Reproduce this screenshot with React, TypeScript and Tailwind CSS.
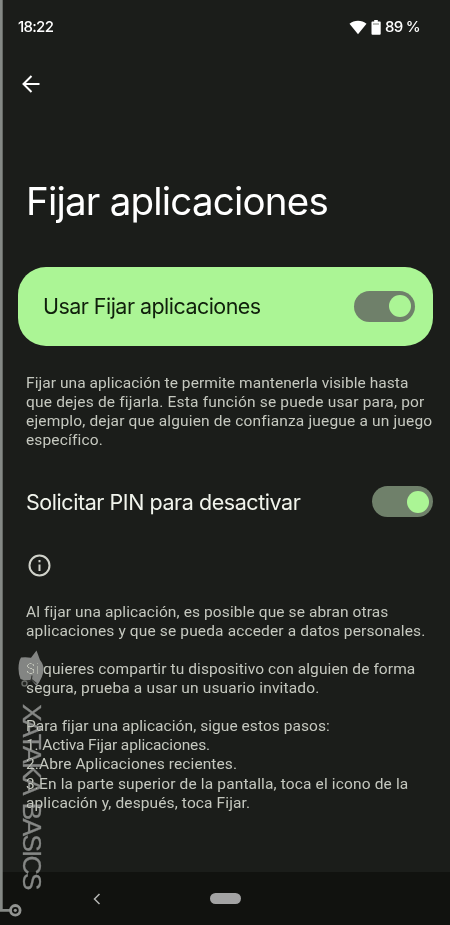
type Line = { text: string; className?: string }

const introLines: Line[] = [
    { text: "Fijar una aplicación te permite mantenerla visible hasta", className: "tracking-[0.060px]" },
    { text: "que dejes de fijarla. Esta función se puede usar para, por", className: "tracking-[0.180px]" },
    { text: "ejemplo, dejar que alguien de confianza juegue a un juego", className: "tracking-[0.165px]" },
    { text: "específico.", className: "tracking-[0.150px]" },
]

const infoParagraphs: Line[][] = [
    [
        { text: "Al fijar una aplicación, es posible que se abran otras", className: "tracking-[0.110px]" },
        { text: "aplicaciones y que se pueda acceder a datos personales.", className: "tracking-[0.140px]" },
    ],
    [
        { text: "Si quieres compartir tu dispositivo con alguien de forma", className: "tracking-[0.090px]" },
        { text: "segura, prueba a usar un usuario invitado.", className: "tracking-[0.160px]" },
    ],
    [
        { text: "Para fijar una aplicación, sigue estos pasos:", className: "tracking-[0.060px]" },
        { text: "1. Activa Fijar aplicaciones.", className: "tracking-[-0.130px]" },
        { text: "2.Abre Aplicaciones recientes.", className: "tracking-[0.090px]" },
        { text: "3.En la parte superior de la pantalla, toca el icono de la", className: "tracking-[0.140px]" },
        { text: "aplicación y, después, toca Fijar.", className: "tracking-[0.120px]" },
    ],
]

function Paragraph({ lines }: { lines: Line[] }) {
    return (
        <p className="font-['Roboto',sans-serif] text-[15.5px] leading-[19.05px] text-[#c5c8bf]">
            {lines.map((line) => (
                <span key={line.text} className="block whitespace-nowrap">
                    <span className={line.className}>{line.text}</span>
                </span>
            ))}
        </p>
    )
}

function Toggle() {
    return (
        <div className="flex h-[31px] w-[61px] shrink-0 items-center justify-end rounded-full bg-[#6f806a] pr-[4px]">
            <div className="size-[22px] rounded-full bg-[#abf595]" />
        </div>
    )
}

function StatusBar() {
    return (
        <div className="flex h-[54px] items-center justify-between pl-[18px] pr-[30px] text-[15px] font-medium text-white">
            <span className="tracking-[-0.7px]">18:22</span>
            <div className="flex items-center">
                <svg className="h-[15px] w-[18px]" viewBox="0 0 18 15" fill="currentColor">
                    <path d="M9 14.3 0.5 3.8C5-0.4 13-0.4 17.5 3.8Z" />
                </svg>
                <svg className="ml-1 h-[15px] w-[10px]" viewBox="0 0 10 15">
                    <path d="M3.2 0h3.6v1.6H9q.7 0 .7.7v11.5q0 .9-.9.9H1.4q-.9 0-.9-.9V2.3q0-.7.7-.7h2z" fill="#fff" />
                    <path d="M2 4h6" stroke="#777a75" strokeWidth="1" />
                </svg>
                <span className="ml-1 whitespace-nowrap tracking-[-0.7px]">89 %</span>
            </div>
        </div>
    )
}

function Watermark() {
    return (
        <div className="pointer-events-none absolute inset-0 mix-blend-lighten">
            <svg className="absolute inset-0 h-[925px] w-[60px]" viewBox="0 0 60 925" fill="none">
                <path d="M1.3 0v910.3H10" stroke="#858985" strokeWidth="2.8" />
                <circle cx="15.3" cy="910.3" r="4.8" stroke="#929491" strokeWidth="2.8" />
                <circle cx="15.3" cy="910.3" r="1.6" fill="#929491" />
                <path
                    d="M21 657.5q5-.8 10 .3L36.500 650.500 40 660q3.500 4 3.500 9 0 8-7 17L31.500 680l-7 .5-4-1.500q-2-4.500-2-10.500 0-7 2.500-11Z"
                    fill="#838583"
                />
                <path d="M27 682.500 30 681q2-1.500 2-5.500M31 679l5.500 4.500" stroke="#343633" strokeWidth="1.200" />
                <circle cx="24.500" cy="683.500" r="2.500" fill="#222421" stroke="#686b67" strokeWidth="1.400" />
            </svg>
            <div className="absolute left-[19px] top-[704px] whitespace-nowrap font-['Liberation_Sans',sans-serif] text-[26.500px] leading-[26px] tracking-[-1.850px] text-[#858785] [-webkit-text-stroke:0.3px_#858785] [word-spacing:5px] [writing-mode:vertical-rl]">
                XATAKA BASICS
            </div>
        </div>
    )
}

export default function App() {
    return (
        <div className="relative flex h-[925px] w-[450px] flex-col overflow-hidden bg-[#1b1d1a] font-['Inter',sans-serif]">
            <StatusBar />

            <header className="pl-[21px] pt-5">
                <svg className="size-5" viewBox="0 0 20 20" fill="none" stroke="#fff" strokeWidth="2">
                    <path d="M18.500 10H2.500M10.500 2 2.500 10l8 8" />
                </svg>
            </header>

            <main className="flex grow flex-col pl-[26px] pr-[17.5px]">
                <h1 className="mt-[83px] whitespace-nowrap text-[38.500px] leading-[48px] tracking-[-0.780px] text-white">
                    Fijar aplicaciones
                </h1>

                <section className="-ml-[8.500px] mt-[41.500px] flex h-[79px] items-center justify-between rounded-[28px] bg-[#abf595] pl-[25.500px] pr-[18px]">
                    <span className="whitespace-nowrap text-[21.500px] tracking-[-0.540px] text-[#10200c]">
                        Usar Fijar aplicaciones
                    </span>
                    <Toggle />
                </section>

                <div className="mt-[28.500px]">
                    <Paragraph lines={introLines} />
                </div>

                <section className="mt-[36px] flex h-[31px] items-center justify-between">
                    <span className="whitespace-nowrap text-[21.500px] tracking-[-0.440px] text-[#f1f4ec]">
                        Solicitar PIN para desactivar
                    </span>
                    <Toggle />
                </section>

                <svg className="ml-[1.500px] mt-[37px] size-[23px] shrink-0" viewBox="0 0 23 23" fill="none" stroke="#d0d2ca" strokeWidth="2">
                    <circle cx="11.500" cy="11.500" r="10" />
                    <path d="M11.500 10.500v6.500M11.500 6v2.200" />
                </svg>

                <div className="mt-[26px] flex flex-col gap-[19px]">
                    {infoParagraphs.map((lines) => (
                        <Paragraph key={lines[0].text} lines={lines} />
                    ))}
                </div>
            </main>

            <nav className="grid h-[53px] shrink-0 grid-cols-[194px_62px] items-center justify-items-center bg-[#11120f]">
                <svg className="h-3 w-2" viewBox="0 0 8 12" fill="none" stroke="#b5b6b3" strokeWidth="1.500">
                    <path d="M6.500 1 1.500 6l5 5" />
                </svg>
                <div className="h-[11px] w-[31px] rounded-full bg-[#a3a3a3]" />
            </nav>

            <Watermark />
        </div>
    )
}
